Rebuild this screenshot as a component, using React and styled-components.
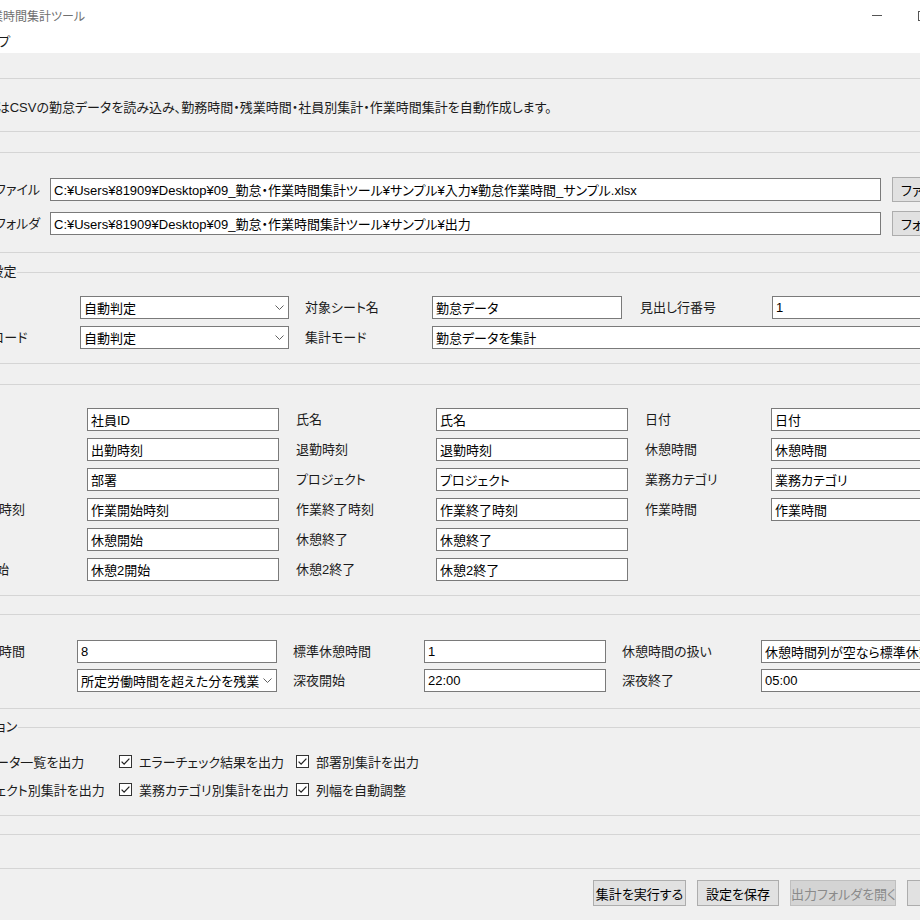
import React from 'react';
import styled, { createGlobalStyle } from 'styled-components';

const GlobalStyle = createGlobalStyle`
  html, body {
    margin: 0;
    padding: 0;
    background: #f0f0f0;
    overflow: hidden;
  }
  body {
    font-family: "Liberation Sans", "Noto Sans CJK JP", sans-serif;
    font-size: 13px;
    color: #1b1b1b;
    font-feature-settings: "palt";
  }
`;

const Window = styled.div`
  width: 1070px;
  height: 920px;
  margin-left: -78px;
  background: #f0f0f0;
`;

const TitleBar = styled.div`
  display: flex;
  align-items: center;
  height: 31px;
  background: #fff;
`;

const TitleText = styled.div`
  padding-left: 27px;
  font-size: 12px;
  color: #707070;
  white-space: nowrap;
`;

const CaptionButtons = styled.div`
  display: flex;
  margin-left: auto;
`;

const CaptionButton = styled.div`
  width: 46px;
  height: 31px;
  display: flex;
  align-items: center;
  justify-content: center;
`;

const MenuBar = styled.div`
  display: flex;
  height: 22px;
  margin-left: -15px;
  background: #fff;
`;

const MenuItem = styled.div`
  padding: 0 7px;
  line-height: 22px;
  color: #1b1b1b;
`;

const Client = styled.div`
  padding: 0 10px;
`;

const Frame = styled.fieldset`
  margin: ${p => p.$top}px 0 0;
  padding: ${p => p.$pt}px 0 ${p => p.$pb}px;
  border: 1px solid #d5d5d5;
  min-width: 0;
  min-height: ${p => p.$min || 0}px;
  box-sizing: border-box;
`;

const Legend = styled.legend`
  margin-left: ${p => p.$ml ?? 7}px;
  padding: 0 1px;
  line-height: 18px;
  font-size: 13px;
  color: #1b1b1b;
`;

const Description = styled.div`
  padding-left: 3px;
  line-height: 18px;
  white-space: nowrap;
`;

const FieldGrid = styled.div`
  display: grid;
  grid-template-columns: ${p => p.$cols};
  grid-auto-rows: ${p => p.$row || 23}px;
  row-gap: ${p => p.$gap}px;
  padding-left: ${p => p.$pad}px;
  align-items: center;
`;

const FieldLabel = styled.div`
  padding-left: ${p => p.$indent || 0}px;
  line-height: 23px;
  white-space: nowrap;
  overflow: hidden;
`;

const Entry = styled.input`
  box-sizing: border-box;
  width: 100%;
  height: 23px;
  margin: 0;
  padding: 0 3px;
  border: 1px solid #7a7a7a;
  border-radius: 0;
  background: #fff;
  font: inherit;
  color: #000;
  outline: none;
  grid-column: ${p => p.$span || 'auto'};
`;

const Combo = styled.div`
  box-sizing: border-box;
  display: flex;
  align-items: center;
  height: 23px;
  border: 1px solid #7a7a7a;
  background: #fff;
  color: #000;
`;

const ComboText = styled.div`
  flex: 1;
  padding-left: 3px;
  white-space: nowrap;
  overflow: hidden;
`;

const ComboArrow = styled.div`
  width: 17px;
  display: flex;
  justify-content: center;
`;

const Button = styled.button`
  box-sizing: border-box;
  width: ${p => p.$w}px;
  height: ${p => p.$h || 26}px;
  margin-left: ${p => p.$ml || 0}px;
  padding: 0;
  border: 1px solid ${p => (p.disabled ? '#bfbfbf' : '#adadad')};
  border-radius: 0;
  background: ${p => (p.disabled ? '#d4d4d4' : '#e1e1e1')};
  color: ${p => (p.disabled ? '#8a8a8a' : '#000')};
  font: inherit;
  white-space: nowrap;
  overflow: hidden;
`;

const CheckItem = styled.label`
  display: flex;
  align-items: center;
  gap: 7px;
  white-space: nowrap;
  color: #1b1b1b;
`;

const ButtonBar = styled.div`
  display: flex;
  justify-content: flex-end;
  gap: 11px;
  margin-top: 11px;
`;

const Chevron = () => (
  <svg width="9" height="5" viewBox="0 0 9 5">
    <polyline points="0.5,0.5 4.5,4.5 8.5,0.5" fill="none" stroke="#606060" strokeWidth="1" />
  </svg>
);

const CheckBox = () => (
  <svg width="13" height="13" viewBox="0 0 13 13">
    <rect x="0.5" y="0.5" width="12" height="12" fill="#fff" stroke="#333" />
    <polyline points="2.6,6.6 5.1,9.1 10.4,3.6" fill="none" stroke="#222" strokeWidth="1.3" />
  </svg>
);

const Select = ({ value }) => (
  <Combo>
    <ComboText>{value}</ComboText>
    <ComboArrow><Chevron /></ComboArrow>
  </Combo>
);

const Check = ({ children }) => (
  <CheckItem>
    <CheckBox />
    {children}
  </CheckItem>
);

const columnRows = [
  ['社員ID', '社員ID', '氏名', '氏名', '日付', '日付'],
  ['出勤時刻', '出勤時刻', '退勤時刻', '退勤時刻', '休憩時間', '休憩時間'],
  ['部署', '部署', 'プロジェクト', 'プロジェクト', '業務カテゴリ', '業務カテゴリ'],
  ['作業開始時刻', '作業開始時刻', '作業終了時刻', '作業終了時刻', '作業時間', '作業時間'],
  ['休憩開始', '休憩開始', '休憩終了', '休憩終了'],
  ['休憩２開始', '休憩2開始', '休憩2終了', '休憩2終了'],
];

export default function App() {
  return (
    <>
      <GlobalStyle />
      <Window>
        <TitleBar>
          <TitleText>勤怠・作業時間集計ツール</TitleText>
          <CaptionButtons>
            <CaptionButton>
              <svg width="10" height="1" viewBox="0 0 10 1"><rect width="10" height="1" fill="#555" /></svg>
            </CaptionButton>
            <CaptionButton>
              <svg width="10" height="10" viewBox="0 0 10 10"><rect x="0.5" y="0.5" width="9" height="9" fill="none" stroke="#555" /></svg>
            </CaptionButton>
            <CaptionButton>
              <svg width="10" height="10" viewBox="0 0 10 10"><path d="M0 0L10 10M10 0L0 10" stroke="#555" /></svg>
            </CaptionButton>
          </CaptionButtons>
        </TitleBar>
        <MenuBar>
          <MenuItem>ファイル</MenuItem>
          <MenuItem>ヘルプ</MenuItem>
        </MenuBar>

        <Client>
          <Frame $top={16} $pt={12} $pb={14}>
            <Legend>説明</Legend>
            <Description>
              このツールはCSVの勤怠データを読み込み、勤務時間・残業時間・社員別集計・作業時間集計を自動作成します。
            </Description>
          </Frame>

          <Frame $top={11} $pt={16} $pb={16}>
            <Legend>ファイル</Legend>
            <FieldGrid $cols="81px 831px 1fr" $row={25} $gap={9} $pad={36}>
              <FieldLabel>入力ファイル</FieldLabel>
              <Entry readOnly value="C:¥Users¥81909¥Desktop¥09_勤怠・作業時間集計ツール¥サンプル¥入力¥勤怠作業時間_サンプル.xlsx" />
              <Button $w={89} $h={25} $ml={11}>ファイル選択</Button>
              <FieldLabel>出力フォルダ</FieldLabel>
              <Entry readOnly value="C:¥Users¥81909¥Desktop¥09_勤怠・作業時間集計ツール¥サンプル¥出力" />
              <Button $w={89} $h={25} $ml={11}>フォルダ選択</Button>
            </FieldGrid>
          </Frame>

          <Frame $top={10} $pt={15} $pb={14}>
            <Legend $ml={5}>読み込み設定</Legend>
            <FieldGrid $cols="140px 209px 143px 190px 150px 200px" $gap={7} $pad={7}>
              <FieldLabel>入力形式</FieldLabel>
              <Select value="自動判定" />
              <FieldLabel $indent={16}>対象シート名</FieldLabel>
              <Entry readOnly value="勤怠データ" />
              <FieldLabel $indent={18}>見出し行番号</FieldLabel>
              <Entry readOnly value="1" />
              <FieldLabel>入力文字コード</FieldLabel>
              <Select value="自動判定" />
              <FieldLabel $indent={16}>集計モード</FieldLabel>
              <Entry readOnly value="勤怠データを集計" $span="4 / -1" />
            </FieldGrid>
          </Frame>

          <Frame $top={11} $pt={15} $pb={14}>
            <Legend>列名設定</Legend>
            <FieldGrid $cols="140px 192px 157px 192px 143px 192px" $gap={7} $pad={14}>
              {columnRows.map(([l1, v1, l2, v2, l3, v3]) => (
                <React.Fragment key={v1}>
                  <FieldLabel>{l1}</FieldLabel>
                  <Entry readOnly value={v1} />
                  <FieldLabel $indent={17}>{l2}</FieldLabel>
                  <Entry readOnly value={v2} />
                  {l3 ? <FieldLabel $indent={17}>{l3}</FieldLabel> : <div />}
                  {v3 ? <Entry readOnly value={v3} /> : <div />}
                </React.Fragment>
              ))}
            </FieldGrid>
          </Frame>

          <Frame $top={9} $pt={17} $pb={16}>
            <Legend>勤務設定</Legend>
            <FieldGrid $cols="130px 200px 147px 182px 155px 200px" $gap={6} $pad={14}>
              <FieldLabel>所定労働時間</FieldLabel>
              <Entry readOnly value="8" />
              <FieldLabel $indent={16}>標準休憩時間</FieldLabel>
              <Entry readOnly value="1" />
              <FieldLabel $indent={16}>休憩時間の扱い</FieldLabel>
              <Entry readOnly value="休憩時間列が空なら標準休憩を適用" />
              <FieldLabel>残業計算</FieldLabel>
              <Select value="所定労働時間を超えた分を残業" />
              <FieldLabel $indent={16}>深夜開始</FieldLabel>
              <Entry readOnly value="22:00" />
              <FieldLabel $indent={16}>深夜終了</FieldLabel>
              <Entry readOnly value="05:00" />
            </FieldGrid>
          </Frame>

          <Frame $top={9} $pt={15} $pb={16}>
            <Legend $ml={0}>出力オプション</Legend>
            <FieldGrid $cols="181px 177px 1fr" $row={20} $gap={8} $pad={5}>
              <Check>勤怠データ一覧を出力</Check>
              <Check>エラーチェック結果を出力</Check>
              <Check>部署別集計を出力</Check>
              <Check>プロジェクト別集計を出力</Check>
              <Check>業務カテゴリ別集計を出力</Check>
              <Check>列幅を自動調整</Check>
            </FieldGrid>
          </Frame>

          <Frame $top={9} $pt={0} $pb={0} $min={44}>
            <Legend>実行</Legend>
          </Frame>

          <ButtonBar>
            <Button $w={93}>集計を実行する</Button>
            <Button $w={82}>設定を保存</Button>
            <Button $w={106} disabled>出力フォルダを開く</Button>
            <Button $w={75}>閉じる</Button>
          </ButtonBar>
        </Client>
      </Window>
    </>
  );
}
